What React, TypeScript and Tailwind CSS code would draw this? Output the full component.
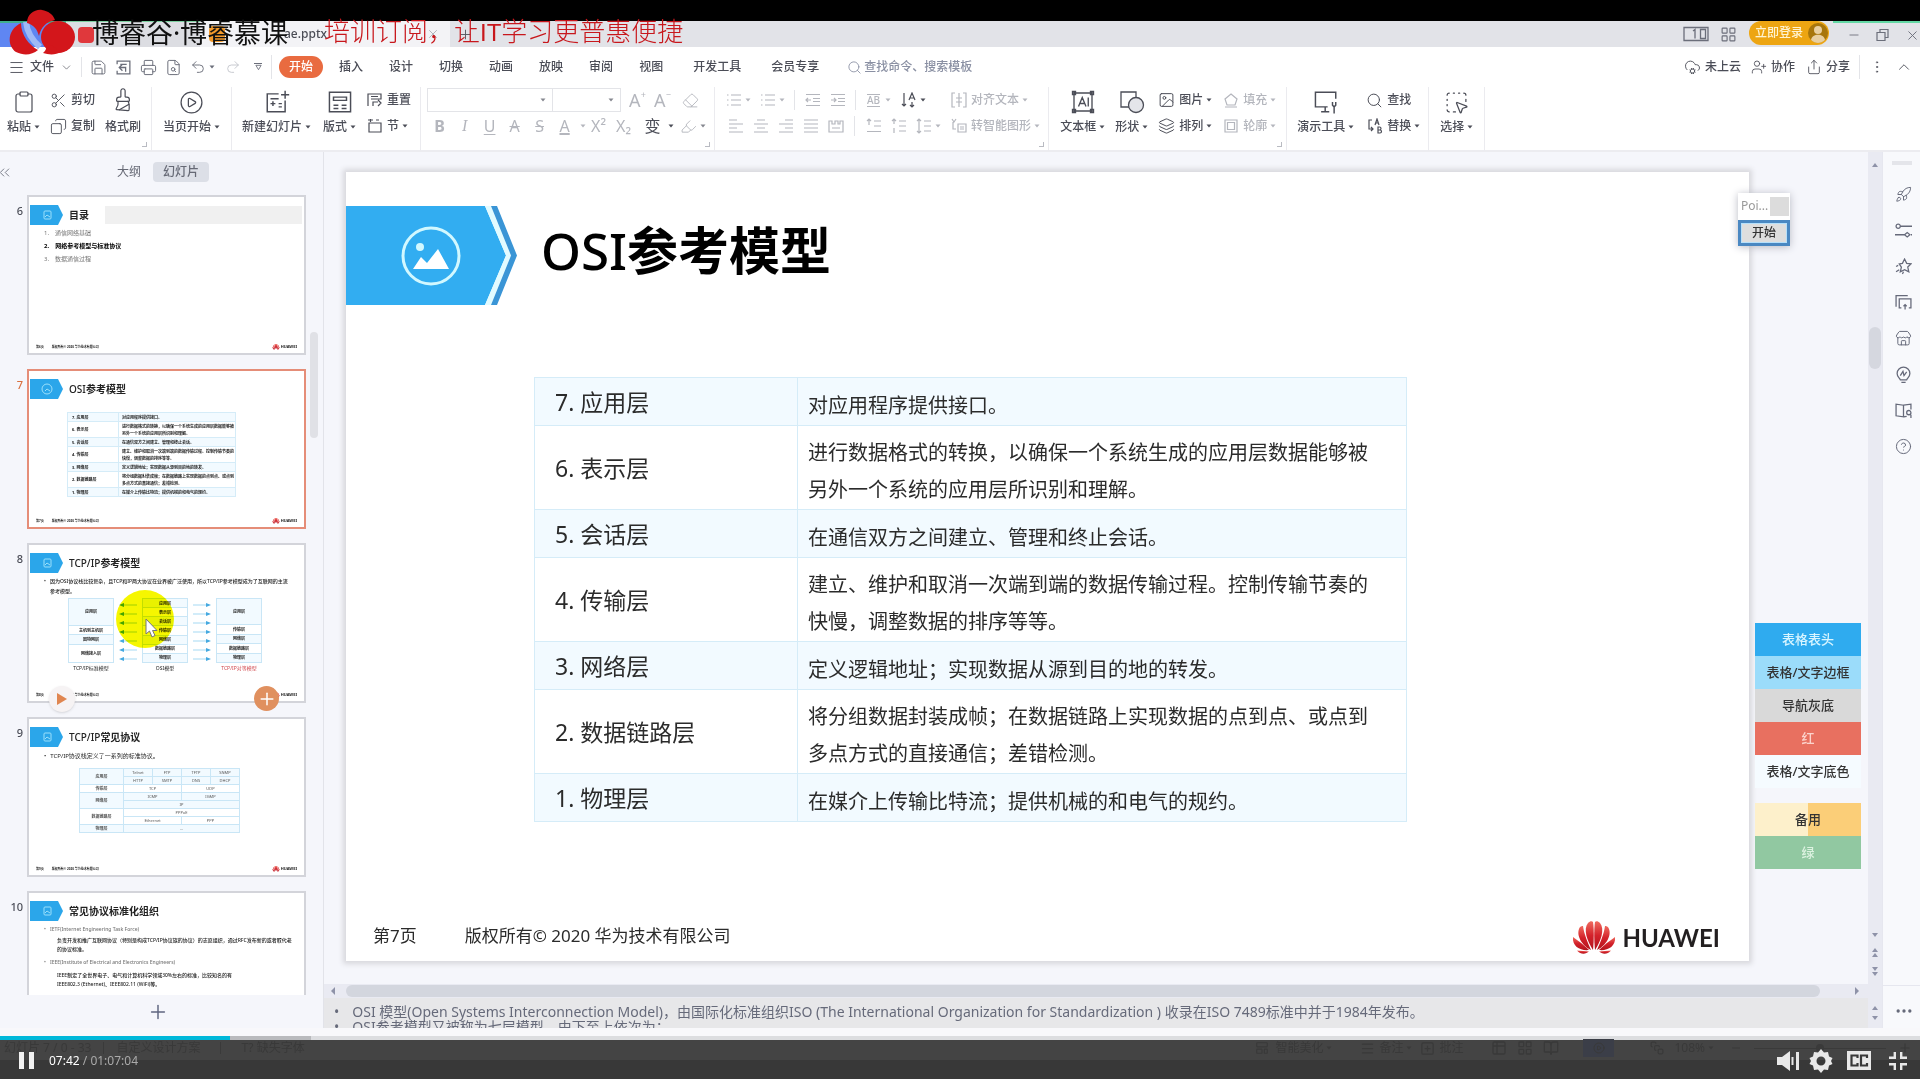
import type { ReactNode } from 'react';
import {
  BookOpen, ChevronDown, ChevronUp, ChevronsLeft, CircleHelp, CirclePlay, CloudCog, Copy, Ellipsis, EllipsisVertical,
  Eraser, FileSearch, Highlighter, Image as ImageIcon, Layers, LayoutGrid, LayoutTemplate,
  Menu, Minus, Paintbrush, Plus, Printer, Redo2, Rocket, Save, Scissors, Search, Share,
  SquareDashedMousePointer, Store, Table2, Undo2, UserPlus, X, Clipboard, SquarePlus, SquareStack,
} from 'lucide-react';

const DIM = 'text-[#b4b6bd]';

interface LayerRow {
  name: string;
  lines: string[];
}

const LAYERS: LayerRow[] = [
  { name: '7. 应用层', lines: ['对应用程序提供接口。'] },
  { name: '6. 表示层', lines: ['进行数据格式的转换，以确保一个系统生成的应用层数据能够被', '另外一个系统的应用层所识别和理解。'] },
  { name: '5. 会话层', lines: ['在通信双方之间建立、管理和终止会话。'] },
  { name: '4. 传输层', lines: ['建立、维护和取消一次端到端的数据传输过程。控制传输节奏的', '快慢，调整数据的排序等等。'] },
  { name: '3. 网络层', lines: ['定义逻辑地址；实现数据从源到目的地的转发。'] },
  { name: '2. 数据链路层', lines: ['将分组数据封装成帧；在数据链路上实现数据的点到点、或点到', '多点方式的直接通信；差错检测。'] },
  { name: '1. 物理层', lines: ['在媒介上传输比特流；提供机械的和电气的规约。'] },
];

const TABS = ['插入', '设计', '切换', '动画', '放映', '审阅', '视图'];

/* ---------- shared bits ---------- */

function Caret() {
  return (
    <svg width="6" height="4" viewBox="0 0 6 4" className="ml-[3px] shrink-0" aria-hidden="true">
      <path d="M0.5 0.5h5L3 3.5z" fill="currentColor" />
    </svg>
  );
}

function Sep({ className = 'bg-[#e3e4e8]' }: { className?: string }) {
  return <span className={`w-px shrink-0 ${className}`} />;
}

function Group({ children, className = '', corner = false }: { children: ReactNode; className?: string; corner?: boolean }) {
  return (
    <div className={`relative flex h-16 shrink-0 items-start border-r border-[#ebebef] ${className}`}>
      {children}
      {corner && <span className="absolute right-1 bottom-1 size-[5px] border-r border-b border-[#b9bbc2]" />}
    </div>
  );
}

function BigButton({ icon, label, caret = false }: { icon: ReactNode; label: string; caret?: boolean }) {
  return (
    <button className="flex shrink-0 flex-col items-center gap-[5px] pt-[3px]">
      <span className="flex h-6 items-center">{icon}</span>
      <span className="flex items-center text-xs leading-4 whitespace-nowrap">{label}{caret && <Caret />}</span>
    </button>
  );
}

function SmallButton({ icon, label, caret = false, dim = false }: { icon: ReactNode; label?: string; caret?: boolean; dim?: boolean }) {
  return (
    <button className={`flex h-[26px] shrink-0 items-center whitespace-nowrap ${dim ? DIM : ''}`} aria-label={label ?? '格式'}>
      <span className="flex w-[17px] justify-center">{icon}</span>
      {label && <span className="ml-1 text-xs">{label}</span>}
      {caret && <Caret />}
    </button>
  );
}

function Glyph({ d, size = 16, width = 1.2, fill = 'none' }: { d: string; size?: number; width?: number; fill?: string }) {
  return (
    <svg width={size} height={size} viewBox="0 0 16 16" fill={fill} stroke="currentColor" strokeWidth={width} aria-hidden="true">
      <path d={d} />
    </svg>
  );
}

function LetterCell({ label, children, className = '' }: { label: string; children: ReactNode; className?: string }) {
  return <button aria-label={label} className={`flex h-[26px] w-[25px] shrink-0 items-center justify-center text-base ${className}`}>{children}</button>;
}

function HuaweiPetals({ className }: { className: string }) {
  return (
    <svg viewBox="0 0 44 34" className={className} aria-hidden="true">
      <defs>
        <linearGradient id="petal" x1="0" y1="0" x2="0" y2="1">
          <stop offset="0" stopColor="#ef6a5e" />
          <stop offset="0.5" stopColor="#d3212a" />
          <stop offset="1" stopColor="#b3141d" />
        </linearGradient>
      </defs>
      <g fill="url(#petal)">
        <path d="M21 29C15 20 11 8 16 2c2-2 4-2 5-1 1 6 1 18 0 28z" />
        <path d="M23 29C29 20 33 8 28 2c-2-2-4-2-5-1-1 6-1 18 0 28z" />
        <path d="M19 29C12 26 4 16 7 8c1-3 3-3 4-3 1 8 5 17 8 24z" />
        <path d="M25 29c7-3 15-13 12-21-1-3-3-3-4-3-1 8-5 17-8 24z" />
        <path d="M17 29C9 30 0 26 1 16c1 1 9 6 16 13z" />
        <path d="M27 29c8 1 17-3 16-13-1 1-9 6-16 13z" />
        <path d="M17 30.500c-3 2.500-8 3.500-12-1z" />
        <path d="M27 30.500c3 2.500 8 3.500 12-1z" />
      </g>
    </svg>
  );
}

/* ---------- window chrome ---------- */

function Watermark() {
  return (
    <div className="pointer-events-none absolute top-0 left-2 z-20 flex h-14 items-start whitespace-nowrap">
      <svg width="68" height="46" viewBox="0 0 68 46" className="mt-[9px] shrink-0" aria-hidden="true">
        <path d="M18 13c1 10 6 18 14 25" fill="none" stroke="#9fbaf7" strokeWidth="6" />
        <path d="M19 14C19 5 27 0 34 1c6 1 11 4 13 10-9 2-14 7-16 16-2-7-5-11-12-13z" fill="#d3161b" />
        <path d="M13 14C0 20-2 36 8 43c8 4 16 3 22-2C21 36 13 26 13 14z" fill="#d3161b" />
        <ellipse cx="50" cy="28" rx="17" ry="16" fill="#d3161b" />
        <path d="M35 44c4-3 4-7 2-12l16 11c-5 3-12 3-18 1z" fill="#d3161b" />
      </svg>
      <span className="ml-4 flex h-[29px] pt-[18px] text-[27px] leading-[29px] text-[#111]">
        <span>博睿谷</span><span className="flex w-[7px] justify-center">·</span><span>博睿慕课</span>
      </span>
      <span className="ml-9 pt-[15px] text-[26px] leading-8 font-light text-[#c8171c]">
        培训订阅，让<span className="font-['Liberation_Sans',sans-serif] text-2xl">IT</span>学习更普惠便捷
      </span>
    </div>
  );
}

function TitleBar() {
  return (
    <div className="flex h-[26px] items-stretch bg-[#e2e3e8] text-[#6b6e7a]">
      <div className="w-[66px] border-t-2 border-[#3fae8c] bg-[#5f86f2]" />
      <div className="flex w-[134px] items-center border-t border-[#7ccf9f] bg-[#dcdde2] pl-3">
        <span className="size-4 rounded-sm bg-[#e0383c]" />
      </div>
      <div className="flex w-[250px] items-center bg-[#f3f3f6] text-xs">
        <span className="ml-[9px] size-4 rounded-sm bg-[#f39a2b]" />
        <span className="ml-[59px] font-medium text-[#4a4c55]">ae.pptx</span>
        <button aria-label="关闭标签" className="ml-auto pr-[10px]"><X size={14} strokeWidth={1.5} className="text-[#a9abb3]" /></button>
      </div>
      <button aria-label="新建" className="pl-2 text-[#55575f]"><Plus size={15} strokeWidth={1.5} /></button>
      <div className="ml-auto flex items-center">
        <svg width="26" height="16" viewBox="0 0 26 16" fill="none" stroke="currentColor" strokeWidth="1.300" aria-hidden="true">
          <path d="M1 1.500h24v13H1zM17.500 3.500h5v9h-5zM10 5l2-1.500v9" />
        </svg>
        <LayoutGrid size={17} strokeWidth={1.6} className="ml-[11px]" />
        <button className="ml-3 flex h-6 w-20 items-center justify-end gap-[5px] self-start rounded-full bg-[#eda512] pr-px text-xs font-medium text-[#fff3d0]">
          立即登录
          <svg width="20" height="22" viewBox="0 0 20 22" aria-hidden="true">
            <circle cx="10" cy="11" r="10" fill="#a8760c" />
            <circle cx="10" cy="8" r="4" fill="#e9cfa0" />
            <path d="M3 18c1-7 13-7 14 0-4 4-10 4-14 0z" fill="#e9cfa0" />
          </svg>
        </button>
        <div className="ml-1 flex h-full items-center gap-[14px] border-t-2 border-[#63d8a4] pl-[14px]">
          <Minus size={14} strokeWidth={1.5} />
          <Glyph d="M2 5.500h8v8H2zM5 5.500v-3h8v8h-3" />
          <X size={15} strokeWidth={1.5} />
        </div>
      </div>
    </div>
  );
}

function MenuRow() {
  return (
    <div className="flex h-10 items-center bg-white text-xs font-medium whitespace-nowrap text-[#4b4d57]">
      <Menu size={17} strokeWidth={1.3} className="ml-2" />
      <button className="ml-[5px]">文件</button>
      <ChevronDown size={13} strokeWidth={1.2} className="ml-[6px]" />
      <Sep className="mx-2 h-5 bg-[#e3e4e8]" />
      <div className="flex items-center gap-2 text-[#6b6e7a]">
        <Save size={17} strokeWidth={1.4} />
        <Glyph size={17} d="M2 5V2h12v12H2v-3M5 5h6M7 11l-3-3 3-3M4 8h6v4" />
        <Printer size={17} strokeWidth={1.4} />
        <FileSearch size={17} strokeWidth={1.4} />
        <span className="flex items-center"><Undo2 size={16} strokeWidth={1.4} /><Caret /></span>
        <Redo2 size={16} strokeWidth={1.4} className="ml-[2px] text-[#c4c6cc]" />
        <span className="ml-[5px] flex flex-col items-center"><span className="h-px w-2 bg-current" /><Glyph size={7} width={2} d="M2 3h12L8 13z" /></span>
      </div>
      <Sep className="mr-[7px] ml-[9px] h-6 bg-[#e3e4e8]" />
      <button className="h-[22px] rounded-full bg-[#e96b40] px-[10px] text-white">开始</button>
      <nav className="ml-4 flex items-center gap-[26px]">
        {TABS.map((tab) => <button key={tab}>{tab}</button>)}
      </nav>
      <button className="ml-[30px]">开发工具</button>
      <button className="ml-[30px]">会员专享</button>
      <label className="ml-7 flex items-center text-[#8a90a3]">
        <Search size={15} strokeWidth={1.4} />
        <input aria-label="搜索" placeholder="查找命令、搜索模板" className="ml-[2px] w-32 bg-transparent placeholder:text-[#8a90a3]" />
      </label>
      <div className="ml-auto flex items-center">
        <button className="flex items-center gap-1"><CloudCog size={17} strokeWidth={1.3} />未上云</button>
        <button className="ml-[10px] flex items-center gap-1"><UserPlus size={16} strokeWidth={1.3} />协作</button>
        <button className="ml-[11px] flex items-center gap-1"><Share size={16} strokeWidth={1.3} />分享</button>
        <Sep className="mx-[9px] h-6 bg-[#e3e4e8]" />
        <EllipsisVertical size={16} strokeWidth={1.2} />
        <ChevronUp size={18} strokeWidth={1.2} className="mr-[7px] ml-[10px]" />
      </div>
    </div>
  );
}

const LIST = 'M5 3h10M5 8h10M5 13h10M1 3h1.500M1 8h1.500M1 13h1.500';
const INDENT_LESS = 'M1 2.500h14M8 6.500h7M8 9.500h7M1 13.500h14M6 8H1M3 6L1 8l2 2';
const INDENT_MORE = 'M1 2.500h14M8 6.500h7M8 9.500h7M1 13.500h14M1 8h5M4 6l2 2-2 2';
const ALIGN_LEFT = 'M1 2h8M1 6h14M1 10h8M1 14h14';
const ALIGN_CENTER = 'M4 2h8M1 6h14M4 10h8M1 14h14';
const ALIGN_RIGHT = 'M7 2h8M1 6h14M7 10h8M1 14h14';
const JUSTIFY = 'M1 2h14M1 6h14M1 10h14M1 14h14';
const SPACE_TOP = 'M3 1v6M1 3l2-2 2 2M1 13.500h14M8 3h7M8 8h7';
const SPACE_MID = 'M3 1v5M1 3l2-2 2 2M3 15v-5M8 3h7M8 8h7M8 13h7';
const SPACE_ALL = 'M3 1v14M1 3l2-2 2 2M1 13l2 2 2-2M8 3h7M8 8h7M8 13h7';

function Ribbon() {
  return (
    <div className="flex h-[65px] border-b-2 border-[#ececf0] bg-white font-medium text-[#4b4d57]">
      <Group className="gap-[10px] pr-[10px] pl-[7px]" corner>
        <BigButton icon={<Clipboard size={24} strokeWidth={1.2} />} label="粘贴" caret />
        <div>
          <SmallButton icon={<Scissors size={17} strokeWidth={1.3} />} label="剪切" />
          <SmallButton icon={<Copy size={17} strokeWidth={1.3} className="-scale-x-100" />} label="复制" />
        </div>
        <BigButton icon={<Paintbrush size={24} strokeWidth={1.2} className="-rotate-45" />} label="格式刷" />
      </Group>
      <Group className="px-[11px]">
        <BigButton icon={<CirclePlay size={25} strokeWidth={1.2} />} label="当页开始" caret />
      </Group>
      <Group className="pr-[9px] pl-[10px]">
        <BigButton icon={<Glyph size={26} width={0.9} d="M9 3H2v11h11V7M13 1v5M10.500 3.500h5M4 6h5M4 9h3M5.500 7.500v3M9 9h2M9 11h2" />} label="新建幻灯片" caret />
        <div className="mr-[10px] ml-3">
          <BigButton icon={<Glyph size={26} width={0.9} d="M1.500 2h13v12h-13zM4 5h8v2H4zM4 10h3M9 10h3M9 12h3M4 12h3" />} label="版式" caret />
        </div>
        <div>
          <SmallButton icon={<Glyph d="M1 14V2h13v5H4M4 4.500h7M6 14v-4h5M11 8l3 3-3 3" />} label="重置" />
          <SmallButton icon={<Glyph d="M2 5h12v9H2zM1 2h5M9 2h3M3.500 1v3" />} label="节" caret />
        </div>
      </Group>
      <Group className="flex-col pr-2 pl-[6px] font-normal" corner>
        <div className="flex h-[26px] items-center text-[#b4b6bd]">
          <span className="relative flex h-6 w-[126px] items-center justify-end border border-[#e3e4e8] pr-[6px] text-[#85878f]">
            <select aria-label="字体" className="absolute inset-0 appearance-none" /><Caret />
          </span>
          <span className="relative flex h-6 w-[68px] items-center justify-end border border-l-0 border-[#e3e4e8] pr-[6px] text-[#85878f]">
            <select aria-label="字号" className="absolute inset-0 appearance-none" /><Caret />
          </span>
          <span className="ml-2 flex w-[17px] items-start text-lg leading-5">A<span className="text-[9px] leading-[10px]">+</span></span>
          <span className="ml-2 flex w-[17px] items-start text-lg leading-5">A<span className="text-[9px] leading-[10px]">−</span></span>
          <Eraser size={17} strokeWidth={1.3} className="ml-[11px]" />
        </div>
        <div className="flex h-[26px] items-center text-[#b4b6bd]">
          <LetterCell label="加粗" className="font-bold">B</LetterCell>
          <LetterCell label="倾斜" className="font-['Liberation_Serif',serif] italic">I</LetterCell>
          <LetterCell label="下划线" className="underline underline-offset-2">U</LetterCell>
          <LetterCell label="字符边框" className="line-through">A</LetterCell>
          <LetterCell label="删除线" className="line-through">S</LetterCell>
          <LetterCell label="字体颜色" className="underline decoration-2">A</LetterCell>
          <Caret />
          <LetterCell label="上标">X²</LetterCell>
          <LetterCell label="下标">X₂</LetterCell>
          <span className="ml-1 flex items-center text-[#4b4d57]"><LetterCell label="拼音">变</LetterCell><Caret /></span>
          <span className="ml-[6px] flex items-center"><Highlighter size={17} strokeWidth={1.3} /><span className="flex text-[#85878f]"><Caret /></span></span>
        </div>
      </Group>
      <Group className={`flex-col pr-1 pl-[10px] ${DIM}`} corner>
        <div className="flex h-[26px] items-center">
          <SmallButton icon={<Glyph d={LIST} />} caret />
          <span className="ml-2"><SmallButton icon={<Glyph d={LIST} />} caret /></span>
          <Sep className="mx-[9px] h-5 bg-[#e3e4e8]" />
          <span className="flex gap-2"><SmallButton icon={<Glyph d={INDENT_LESS} />} /><SmallButton icon={<Glyph d={INDENT_MORE} />} /></span>
          <Sep className="mx-[9px] h-5 bg-[#e3e4e8]" />
          <SmallButton icon={<span className="border-y border-current text-[10px] leading-[11px]">AB</span>} caret />
          <span className="ml-[9px] text-[#4b4d57]"><SmallButton icon={<Glyph d="M3 1v13M1 12l2 2 2-2M8 8l3-7 3 7M9 6h4M11 10v5M9 13l2 2 2-2" />} caret /></span>
          <span className="ml-6"><SmallButton icon={<Glyph d="M4 1H1v14h3M12 1h3v14h-3M8 1v14M5 6h6M5 10h6" />} label="对齐文本" caret dim /></span>
        </div>
        <div className="flex h-[26px] items-center">
          <span className="ml-[2px] flex gap-2">
            <SmallButton icon={<Glyph d={ALIGN_LEFT} />} />
            <SmallButton icon={<Glyph d={ALIGN_CENTER} />} />
            <SmallButton icon={<Glyph d={ALIGN_RIGHT} />} />
            <SmallButton icon={<Glyph d={JUSTIFY} />} />
            <SmallButton icon={<Glyph d="M1 3h3v3h3V3h3v3h2V3h3v11H1zM4 10h8" />} />
          </span>
          <Sep className="mx-[10px] h-5 bg-[#e3e4e8]" />
          <span className="flex gap-2">
            <SmallButton icon={<Glyph d={SPACE_TOP} />} />
            <SmallButton icon={<Glyph d={SPACE_MID} />} />
            <SmallButton icon={<Glyph d={SPACE_ALL} />} caret />
          </span>
          <span className="mr-1 ml-[9px]"><SmallButton icon={<Glyph d="M7 14h8V6H7zM5 11H2V4M1 1l2 3 2-3M9 9h4M9 11h4" />} label="转智能图形" caret dim /></span>
        </div>
      </Group>
      <Group className="gap-[10px] pr-[10px] pl-[11px]" corner>
        <BigButton icon={<Glyph size={24} width={0.9} d="M2 2h12v12H2zM1 1h2v2H1zM13 1h2v2h-2zM1 13h2v2H1zM13 13h2v2h-2zM5 11l2.500-6L10 11M6 9h3M11.500 5v6" />} label="文本框" caret />
        <BigButton icon={<svg width="26" height="24" viewBox="0 0 26 24" fill="none" stroke="currentColor" strokeWidth="1.300" aria-hidden="true"><path d="M12 17H2V2h15v6" /><circle cx="17" cy="15" r="7.500" fill="#e4e5ea" /></svg>} label="形状" caret />
        <div>
          <SmallButton icon={<ImageIcon size={18} strokeWidth={1.4} />} label="图片" caret />
          <SmallButton icon={<Layers size={18} strokeWidth={1.4} />} label="排列" caret />
        </div>
        <div>
          <SmallButton icon={<Glyph d="M8 2l6 5-2 6H4L2 7zM2 15h12" />} label="填充" caret dim />
          <SmallButton icon={<Glyph d="M2 2h12v12H2zM4.500 4.500h7v7h-7z" />} label="轮廓" caret dim />
        </div>
      </Group>
      <Group className="gap-3 pr-[8px] pl-[10px]">
        <BigButton icon={<Glyph size={26} width={0.9} d="M9 11H1.500V2h12.500v4M5 14h5M7.500 11v3M12 8v2l1 1 1-1V8M13 11v4" />} label="演示工具" caret />
        <div>
          <SmallButton icon={<Search size={17} strokeWidth={1.4} />} label="查找" />
          <SmallButton icon={<Glyph d="M5 2H2v9h4M4 9l2 2-2 2M8 7l2-6 2 6M9 5h2M11 9v6h2a1.500 1.500 0 000-3h-2 1.500a1.500 1.500 0 000-3z" />} label="替换" caret />
        </div>
      </Group>
      <Group className="px-[11px]">
        <BigButton icon={<SquareDashedMousePointer size={25} strokeWidth={1.2} />} label="选择" caret />
      </Group>
    </div>
  );
}

/* ---------- thumbnails ---------- */

interface ThumbProps {
  no: number;
  latin?: string;
  title: string;
  active?: boolean;
  children: ReactNode;
}

function Thumb({ no, latin = '', title, active = false, children }: ThumbProps) {
  return (
    <li className="flex shrink-0">
      <span className={`w-7 shrink-0 pt-2 pr-[5px] text-right text-[11px] leading-[14px] font-medium ${active ? 'text-[#d9703f]' : 'text-[#4b4d57]'}`}>{no}</span>
      <div className={`relative h-[158px] flex-1 bg-white text-[#222] ${active ? 'outline-2 -outline-offset-1 outline-[#e58d78]' : 'outline-2 -outline-offset-1 outline-[#d3d4da]'}`}>
        <div className="flex h-[29px] items-center pt-[9px] pl-[2px]">
          <svg width="33" height="20" viewBox="0 0 33 20" aria-hidden="true">
            <path d="M0 0h28l5 10-5 10H0z" fill="#2ba6ea" />
            {active ? <circle cx="17" cy="10" r="5" fill="none" stroke="#9be0fb" /> : <rect x="14" y="6" width="7" height="8" rx="1" fill="none" stroke="#9be0fb" />}
            <path d="M15 12l2-2 3 2" fill="none" stroke="#9be0fb" />
          </svg>
          <span className="ml-[6px] text-[10px] font-bold"><span className="font-medium">{latin}</span>{title}</span>
          {no === 6 && <span className="mr-[3px] ml-4 h-[18px] flex-1 bg-[#f0f0f0]" />}
        </div>
        {children}
        <div className="absolute inset-x-2 bottom-1 flex h-[6px] items-center text-[3px] font-bold">
          <span>第{no}页</span>
          <span className="ml-2">版权所有© 2020 华为技术有限公司</span>
          <HuaweiPetals className="ml-auto h-[6px] w-2" />
          <span className="ml-px text-[4px]">HUAWEI</span>
        </div>
      </div>
    </li>
  );
}

const BOX = 'flex items-center justify-center border-b border-[#c9e6f6] last:border-b-0';

function MiniColumn({ cells, caption, red = false }: { cells: [string, number][]; caption: string; red?: boolean }) {
  return (
    <div className="w-[46px] shrink-0 text-center text-[4px] leading-[5px]">
      <div className="flex h-[65px] flex-col border border-[#c9e6f6] font-bold">
        {cells.map(([name, span], i) => (
          <div key={name} className={`${BOX} ${i % 2 === 0 ? 'bg-[#f2faff]' : ''}`} style={{ flex: `${span} 0 0px` }}>{name}</div>
        ))}
      </div>
      <p className={`mt-[2px] text-[5px] leading-[6px] whitespace-nowrap ${red ? 'text-[#d0454a]' : ''}`}>{caption}</p>
    </div>
  );
}

function MiniArrows({ flip = false }: { flip?: boolean }) {
  return (
    <svg width="18" height="65" viewBox="0 0 18 65" className={`shrink-0 ${flip ? '-scale-x-100' : ''}`} aria-hidden="true">
      {[7, 16, 25, 34, 43, 52, 61].map((y) => (
        <g key={y}><path d={`M0 ${y}h14`} stroke="#a5d9f3" /><path d={`M13 ${y - 2}l5 2-5 2z`} fill="#45a9e0" /></g>
      ))}
    </svg>
  );
}

function ProtocolTable() {
  const cell = 'border border-[#c9e6f6] p-0';
  return (
    <table className="mt-[7px] ml-[51px] w-[161px] table-fixed border-collapse text-center text-[4px] leading-[7px] text-[#555]">
      <tbody>
        <tr className="bg-[#f2faff]"><th rowSpan={2} className={`${cell} w-11`}>应用层</th><td className={cell}>Telnet</td><td className={cell}>FTP</td><td className={cell}>TFTP</td><td className={cell}>SNMP</td></tr>
        <tr className="bg-[#f2faff]"><td className={cell}>HTTP</td><td className={cell}>SMTP</td><td className={cell}>DNS</td><td className={cell}>DHCP</td></tr>
        <tr><th className={cell}>传输层</th><td colSpan={2} className={cell}>TCP</td><td colSpan={2} className={cell}>UDP</td></tr>
        <tr className="bg-[#f2faff]"><th rowSpan={2} className={cell}>网络层</th><td colSpan={2} className={cell}>ICMP</td><td colSpan={2} className={cell}>IGMP</td></tr>
        <tr className="bg-[#f2faff]"><td colSpan={4} className={cell}>IP</td></tr>
        <tr><th rowSpan={2} className={cell}>数据链路层</th><td colSpan={4} className={cell}>PPPoE</td></tr>
        <tr><td colSpan={2} className={cell}>Ethernet</td><td colSpan={2} className={cell}>PPP</td></tr>
        <tr className="bg-[#f2faff]"><th className={cell}>物理层</th><td colSpan={4} className={cell}>…</td></tr>
      </tbody>
    </table>
  );
}

function SlidePanel() {
  return (
    <aside className="flex w-[324px] shrink-0 flex-col border-r border-[#e2e3e9] bg-[#f5f6fb]">
      <div className="flex h-[42px] shrink-0 items-center pb-[2px] text-xs text-[#666975]">
        <button aria-label="收起"><ChevronsLeft size={17} strokeWidth={1.2} className="-ml-1" /></button>
        <button className="ml-[104px]">大纲</button>
        <button className="ml-3 h-5 w-14 rounded-sm bg-[#dcdfe7] font-medium">幻灯片</button>
      </div>
      <div className="relative min-h-0 flex-1 overflow-hidden pt-[2px] pr-[18px]">
        <ul className="flex flex-col gap-4">
          <Thumb no={6} title="目录">
            <ol className="ml-4 pt-[2px] text-[6px] leading-[13px] text-[#777]">
              <li><span className="mr-[6px]">1.</span>通信网络基础</li>
              <li className="font-bold text-black"><span className="mr-[6px]">2.</span>网络参考模型与标准协议</li>
              <li><span className="mr-[6px]">3.</span>数据通信过程</li>
            </ol>
          </Thumb>
          <Thumb no={7} latin="OSI" title="参考模型" active>
            <table className="mt-[13px] ml-[39px] w-[169px] border-collapse text-[4px] font-bold">
              <tbody>
                {LAYERS.map((row, i) => (
                  <tr key={row.name} className={i % 2 === 0 ? 'bg-[#f2faff]' : ''}>
                    <td className="w-[51px] border border-[#d5ecf8] p-0 pl-1 leading-[7px]">{row.name}</td>
                    <td className="border border-[#d5ecf8] p-0 pt-px pl-[3px] leading-[7px]">{row.lines.map((line) => <p key={line}>{line}</p>)}</td>
                  </tr>
                ))}
              </tbody>
            </table>
          </Thumb>
          <Thumb no={8} latin="TCP/IP" title="参考模型">
            <div className="mt-[3px] mr-[14px] ml-4 flex gap-1 text-[5px] leading-[10px] font-medium">
              <span>•</span>
              <p>因为OSI协议栈比较复杂，且TCP和IP两大协议在业界被广泛使用，所以TCP/IP参考模型成为了互联网的主流参考模型。</p>
            </div>
            <div className="mt-[2px] ml-10 flex gap-[5px]">
              <MiniColumn cells={[['应用层', 3], ['主机到主机层', 1], ['因特网层', 1], ['网络接入层', 2]]} caption="TCP/IP标准模型" />
              <MiniArrows flip />
              <MiniColumn cells={[['应用层', 1], ['表示层', 1], ['会话层', 1], ['传输层', 1], ['网络层', 1], ['数据链路层', 1], ['物理层', 1]]} caption="OSI模型" />
              <MiniArrows />
              <MiniColumn cells={[['应用层', 3], ['传输层', 1], ['网络层', 1], ['数据链路层', 1], ['物理层', 1]]} caption="TCP/IP对等模型" red />
            </div>
            <span className="absolute top-[46px] left-[88px] size-[58px] rounded-full bg-[#f6f600] mix-blend-multiply" />
            <svg width="14" height="20" viewBox="0 0 14 20" className="absolute top-[74px] left-[117px]" aria-hidden="true">
              <path d="M1 1v15l3.500-3L7 19l3-1.500-2.500-5H12z" fill="#fff" stroke="#777" />
            </svg>
            <button aria-label="从此页播放" className="absolute -bottom-[10px] left-[21px] z-10 flex size-[26px] items-center justify-center rounded-full bg-[#f6f3f4] shadow">
              <svg width="10" height="12" viewBox="0 0 10 12" aria-hidden="true"><path d="M0 0l10 6-10 6z" fill="#e08650" /></svg>
            </button>
            <button aria-label="新建幻灯片" className="absolute right-[26px] -bottom-[9px] z-10 flex size-[25px] items-center justify-center rounded-full bg-[#e0905f] text-white">
              <Plus size={20} strokeWidth={1.8} />
            </button>
          </Thumb>
          <Thumb no={9} latin="TCP/IP" title="常见协议">
            <p className="mt-1 ml-4 text-[6px] leading-[10px]"><span className="mr-1">•</span>TCP/IP协议栈定义了一系列的标准协议。</p>
            <ProtocolTable />
          </Thumb>
          <Thumb no={10} title="常见协议标准化组织">
            <div className="mt-1 ml-4 text-[5px] leading-[9px] font-medium">
              <p className="text-[#777]"><span className="mr-1">•</span>IETF(Internet Engineering Task Force)</p>
              <p className="mt-[2px] mr-3 ml-[13px]">负责开发和推广互联网协议（特别是构成TCP/IP协议族的协议）的志愿组织，通过RFC发布新的或者取代老的协议标准。</p>
              <p className="mt-1 text-[#777]"><span className="mr-1">•</span>IEEE(Institute of Electrical and Electronics Engineers)</p>
              <p className="mt-1 mr-6 ml-[13px]">IEEE制定了全世界电子、电气和计算机科学领域30%左右的标准，比较知名的有<br />IEEE802.3 (Ethernet)、IEEE802.11 (WiFi)等。</p>
            </div>
          </Thumb>
        </ul>
        <span className="absolute top-[138px] right-[5px] h-[106px] w-2 rounded-full bg-[#e0e1e6]" />
      </div>
      <button aria-label="添加幻灯片" className="flex h-[33px] shrink-0 items-center justify-center pr-2 text-[#5f6680]">
        <Plus size={22} strokeWidth={1.6} />
      </button>
    </aside>
  );
}

/* ---------- main slide ---------- */

function Slide() {
  return (
    <article className="flex min-w-0 flex-1 flex-col bg-white text-[#2b2b2b] shadow-[0_0_5px_3px_#d8d8dd]">
      <header className="mt-[34px] flex items-center">
        <svg width="171" height="99" viewBox="0 0 171 99" className="shrink-0" aria-hidden="true">
          <path d="M0 0h139l21 49.500L139 99H0z" fill="#32adf1" />
          <path d="M139 0h6l20 49.500L145 99h-6l21-49.500z" fill="#e2fbff" />
          <path d="M145 0h6l20 49.500L151 99h-6l20-49.500z" fill="#3a95d6" />
          <circle cx="85" cy="50" r="28" fill="none" stroke="#d2f8ff" strokeWidth="3" />
          <circle cx="74" cy="41" r="4" fill="#d2f8ff" />
          <path d="M67 63l8-12 6 6 11-14 11 20z" fill="#fff" />
        </svg>
        <h1 className="ml-6 pb-3 text-[51px] leading-[60px] font-medium text-black">OSI<span className="font-bold">参考模型</span></h1>
      </header>
      <table className="mt-[72px] ml-[188px] w-[873px] border-collapse">
        <tbody>
          {LAYERS.map((row, i) => (
            <tr key={row.name} className={`h-12 ${i % 2 === 0 ? 'bg-[#f2faff]' : ''}`}>
              <th scope="row" className="w-[263px] border border-[#d5ecf8] p-0 text-left text-[23px] leading-8 font-normal"><span className="pl-5">{row.name}</span></th>
              <td className="border border-[#d5ecf8] p-0 pt-2 pb-px pl-[10px] text-xl leading-[37px] whitespace-nowrap">
                {row.lines.map((line) => <p key={line}>{line}</p>)}
              </td>
            </tr>
          ))}
        </tbody>
      </table>
      <footer className="mt-auto flex h-[50px] items-center pr-[29px] pl-[27px] text-[17px]">
        <span>第7页</span>
        <span className="ml-12">版权所有© 2020 华为技术有限公司</span>
        <span className="ml-auto flex items-center gap-[6px] pt-1">
          <HuaweiPetals className="h-[34px] w-11" />
          <span className="font-['Lato',sans-serif] text-2xl font-bold text-[#231f20]">HUAWEI</span>
        </span>
      </footer>
    </article>
  );
}

const SWATCH = 'flex h-[33px] items-center justify-center text-[13px] font-medium';

function Palette() {
  return (
    <div className="mt-[451px] ml-[6px] w-[106px] shrink-0 text-[#333]">
      <div className={`${SWATCH} bg-[#2fabef] text-[#d8f5ff]`}>表格表头</div>
      <div className={`${SWATCH} bg-[#9bdcfa]`}>表格/文字边框</div>
      <div className={`${SWATCH} bg-[#d9d9d9]`}>导航灰底</div>
      <div className={`${SWATCH} bg-[#e87060] text-[#fbd3cc]`}>红</div>
      <div className={`${SWATCH} bg-[#f5fbff]`}>表格/文字底色</div>
      <div className={`${SWATCH} mt-[15px] bg-[linear-gradient(90deg,#fdf0cb_50%,#fbce78_50%)]`}>备用</div>
      <div className={`${SWATCH} bg-[#91c8a1] text-[#dcf2e0]`}>绿</div>
    </div>
  );
}

function PointerWindow() {
  return (
    <div className="absolute top-[41px] right-[92px] w-[52px] bg-white shadow-[0_1px_8px_#b9bac4]">
      <div className="flex h-[26px] items-center pl-[3px] text-xs text-[#999]">
        Poi...<span className="mr-px ml-auto size-[19px] bg-[#dcdcdc]" />
      </div>
      <button className="h-[26px] w-full border-3 border-[#4a88c2] bg-[#dedede] text-xs font-medium text-[#333] inset-ring inset-ring-[#b5e0fb]">开始</button>
    </div>
  );
}

function Arrow({ d }: { d: string }) {
  return <svg width="6" height="10" viewBox="0 0 6 10" fill="#8e92a8" aria-hidden="true"><path d={d} /></svg>;
}

const UP = 'M0 7l3-4 3 4z';
const DOWN = 'M0 3l3 4 3-4z';

function Workspace() {
  return (
    <main className="flex min-w-0 flex-1 flex-col bg-[#f5f6fb]">
      <div className="relative flex min-h-0 flex-1">
        <div className="flex min-w-0 flex-1 pt-5 pr-[7px] pb-[23px] pl-[22px]">
          <Slide />
          <Palette />
        </div>
        <div className="relative flex w-[14px] shrink-0 flex-col items-center bg-[#e9eaf2] pt-2 pb-2">
          <Arrow d={UP} />
          <span className="absolute top-[175px] h-[42px] w-3 rounded-full bg-[#d5d7df]" />
          <span className="mt-auto flex flex-col items-center gap-2"><Arrow d={DOWN} /><Arrow d="M0 4l3-4 3 4zM0 9l3-4 3 4z" /><Arrow d="M0 1l3 4 3-4zM0 6l3 4 3-4z" /></span>
        </div>
        <PointerWindow />
      </div>
      <div className="flex h-[14px] shrink-0 items-center bg-[#e9eaf2] pl-[6px]">
        <Arrow d="M5 1L1 5l4 4z" />
        <span className="ml-[10px] h-3 flex-1 rounded-full bg-[#d3d6de]" />
        <span className="mr-[22px] ml-[34px]"><Arrow d="M1 1l4 4-4 4z" /></span>
      </div>
      <div className="flex h-[30px] shrink-0 bg-[#e7e7e9] text-sm leading-[15px] text-[#666a7a]">
        <ul className="min-w-0 flex-1 overflow-hidden pt-[6px] pl-[10px] whitespace-nowrap">
          <li><span className="mr-[13px]">•</span>OSI 模型(Open Systems Interconnection Model)，由国际化标准组织ISO (The International Organization for Standardization ) 收录在ISO 7489标准中并于1984年发布。</li>
          <li><span className="mr-[13px]">•</span>OSI参考模型又被称为七层模型，由下至上依次为：</li>
        </ul>
        <div className="flex w-[14px] flex-col items-center justify-center bg-[#e9eaf2]"><Arrow d={UP} /><Arrow d={DOWN} /></div>
      </div>
    </main>
  );
}

const TOOLS: { name: string; icon: ReactNode }[] = [
  { name: '快捷', icon: <Rocket size={17} strokeWidth={1.4} /> },
  { name: '设置', icon: <Glyph size={17} d="M5 4h11M0 12h9M15 12h1M1 4a2 2 0 104 0 2 2 0 10-4 0M9 12l2.500-2 2.500 2-2.500 2z" /> },
  { name: '动画', icon: <Glyph size={17} d="M9 1l2 4 4 .5-3 3 1 4.500-4-2-4 2 1-4.500-2-3L7 5zM1 8l2-1M1 13l3-2M7 15l1-2" /> },
  { name: '切换', icon: <Glyph size={17} d="M1 12V1.500h11M6 13H4V4.500h11V13h-2M9.500 14.500V10M8 11.500L9.500 10l1.500 1.500" /> },
  { name: '素材', icon: <Store size={17} strokeWidth={1.4} /> },
  { name: '灵感', icon: <Glyph size={17} d="M8 1a6 6 0 016 6c0 3-2 4-3 6H5c-1-2-3-3-3-6a6 6 0 016-6zM6 15.500h4M5 9l2.500-4 1 4L11 5.500" /> },
  { name: '学习', icon: <Glyph size={17} d="M8 3v11l-7-1V2zM8 3l7-1v5M8 14l3-.5M11 10a2 2 0 104 0 2 2 0 10-4 0M15 12v3" /> },
  { name: '帮助', icon: <CircleHelp size={17} strokeWidth={1.4} /> },
];

function ToolStrip() {
  return (
    <aside className="flex w-[38px] shrink-0 flex-col items-center border-l border-[#e6e7ef] bg-[#f8f9fc] text-[#666a7a]">
      <span className="mt-[9px] h-1 w-5 bg-[#e4e5ea]" />
      <div className="mt-[21px] flex flex-col gap-[19px] pl-1">
        {TOOLS.map((tool) => <button key={tool.name} aria-label={tool.name} className="h-[17px]">{tool.icon}</button>)}
      </div>
      <button aria-label="更多" className="mt-auto flex h-[43px] w-full items-center justify-center border-t border-[#e6e7ef] pt-2 pl-1"><Ellipsis size={20} /></button>
    </aside>
  );
}

/* ---------- video player ---------- */

const FAINT_THUMB = '[&::-webkit-slider-thumb]:size-2 [&::-webkit-slider-thumb]:appearance-none [&::-webkit-slider-thumb]:rounded-full [&::-webkit-slider-thumb]:bg-[#3a3a3a]';

function StatusRow() {
  return (
    <div className="flex h-5 items-start bg-[#444] pt-[2px] pl-1 text-xs leading-3 whitespace-nowrap text-[#393939]">
      <span>幻灯片 7 / 0 - 33</span>
      <Sep className="mx-3 h-3 bg-[#3a3a3a]" />
      <span>自定义设计方案</span>
      <Sep className="mx-5 h-3 bg-[#3a3a3a]" />
      <span>T? 缺失字体</span>
      <div className="ml-auto flex h-3 items-center pr-2">
        <LayoutTemplate size={14} /><span className="ml-[6px]">智能美化</span><Caret />
        <Menu size={15} className="ml-7" /><span className="ml-1">备注</span><Caret />
        <SquarePlus size={15} className="ml-2" /><span className="ml-1">批注</span>
        <Table2 size={16} className="ml-7" /><LayoutGrid size={16} className="ml-[10px]" /><BookOpen size={16} className="ml-[10px]" />
        <span className="ml-6 flex h-[18px] w-[31px] items-center justify-center bg-[#3b3e48]"><CirclePlay size={12} /></span>
        <SquareStack size={14} className="ml-9" /><span className="ml-[10px]">108%</span><Caret />
        <Minus size={12} className="ml-4" />
        <input type="range" aria-label="缩放" className={`mx-3 h-px w-[132px] appearance-none bg-[#3a3a3a] ${FAINT_THUMB}`} />
        <Plus size={14} />
      </div>
    </div>
  );
}

function Player() {
  return (
    <footer className="shrink-0">
      <div className="relative flex h-1 bg-[#dcdde0]">
        <span className="w-[12%] bg-[#00b8d9]" />
        <span className="w-[4.2%] bg-[#b9babd]" />
        <input type="range" aria-label="播放进度" defaultValue={12} className="absolute inset-0 w-full opacity-0" />
      </div>
      <div className="relative bg-[#383838] pb-[19px]">
        <StatusRow />
        <div className="absolute inset-x-0 bottom-0 flex h-[37px] items-center pr-[13px] pl-[19px] text-[#e8e8e8]">
          <button aria-label="暂停">
            <svg width="15" height="17" viewBox="0 0 15 17" fill="#f2f2f2" aria-hidden="true"><path d="M0 0h5v17H0zM10 0h5v17h-5z" /></svg>
          </button>
          <p className="ml-[15px] text-xs leading-3 text-[#aaa]"><span className="text-white">07:42</span> / 01:07:04</p>
          <div className="ml-auto flex items-center">
            <button aria-label="音量">
              <svg width="22" height="20" viewBox="0 0 22 20" fill="currentColor" aria-hidden="true"><path d="M0 6h5l8-6v20l-8-6H0zM14.500 6h2v8h-2zM19 1h3v18h-3z" /></svg>
            </button>
            <button aria-label="设置" className="ml-[10px]">
              <svg width="24" height="24" viewBox="0 0 24 24" fill="currentColor" aria-hidden="true"><path fillRule="evenodd" d="M12 0l3 3.500 4-.5 1 4.500 3.500 1.500-1.500 3 1.500 3L20 16.500l-1 4.500-4-.5-3 3.500-3-3.500-4 .5-1-4.500L.5 15 2 12 .5 9 4 7.500 5 3l4 .5zM12 7.500a4.500 4.500 0 100 9 4.500 4.500 0 000-9z" /></svg>
            </button>
            <button aria-label="字幕" className="ml-[14px]">
              <svg width="24" height="19" viewBox="0 0 24 19" aria-hidden="true"><path d="M0 0h24v19H0z" fill="#e8e8e8" /><path d="M10.500 7V4.500h-6v10h6V12M20 7V4.500h-6v10h6V12" fill="none" stroke="#383838" strokeWidth="2.200" /></svg>
            </button>
            <button aria-label="退出全屏" className="ml-[18px]">
              <svg width="18" height="18" viewBox="0 0 18 18" fill="none" stroke="currentColor" strokeWidth="2.400" aria-hidden="true"><path d="M0 5.800h5.800V0M18 5.800h-5.800V0M0 12.200h5.800V18M18 12.200h-5.800V18" /></svg>
            </button>
          </div>
        </div>
      </div>
    </footer>
  );
}

export default function App() {
  return (
    <div lang="zh-CN" className="relative flex h-screen flex-col overflow-hidden bg-black pt-[21px] font-['Noto_Sans','Noto_Sans_CJK_SC',sans-serif]">
      <Watermark />
      <TitleBar />
      <MenuRow />
      <Ribbon />
      <div className="flex min-h-0 flex-1 border-b-8 border-[#f8f8fb]">
        <SlidePanel />
        <Workspace />
        <ToolStrip />
      </div>
      <Player />
    </div>
  );
}
